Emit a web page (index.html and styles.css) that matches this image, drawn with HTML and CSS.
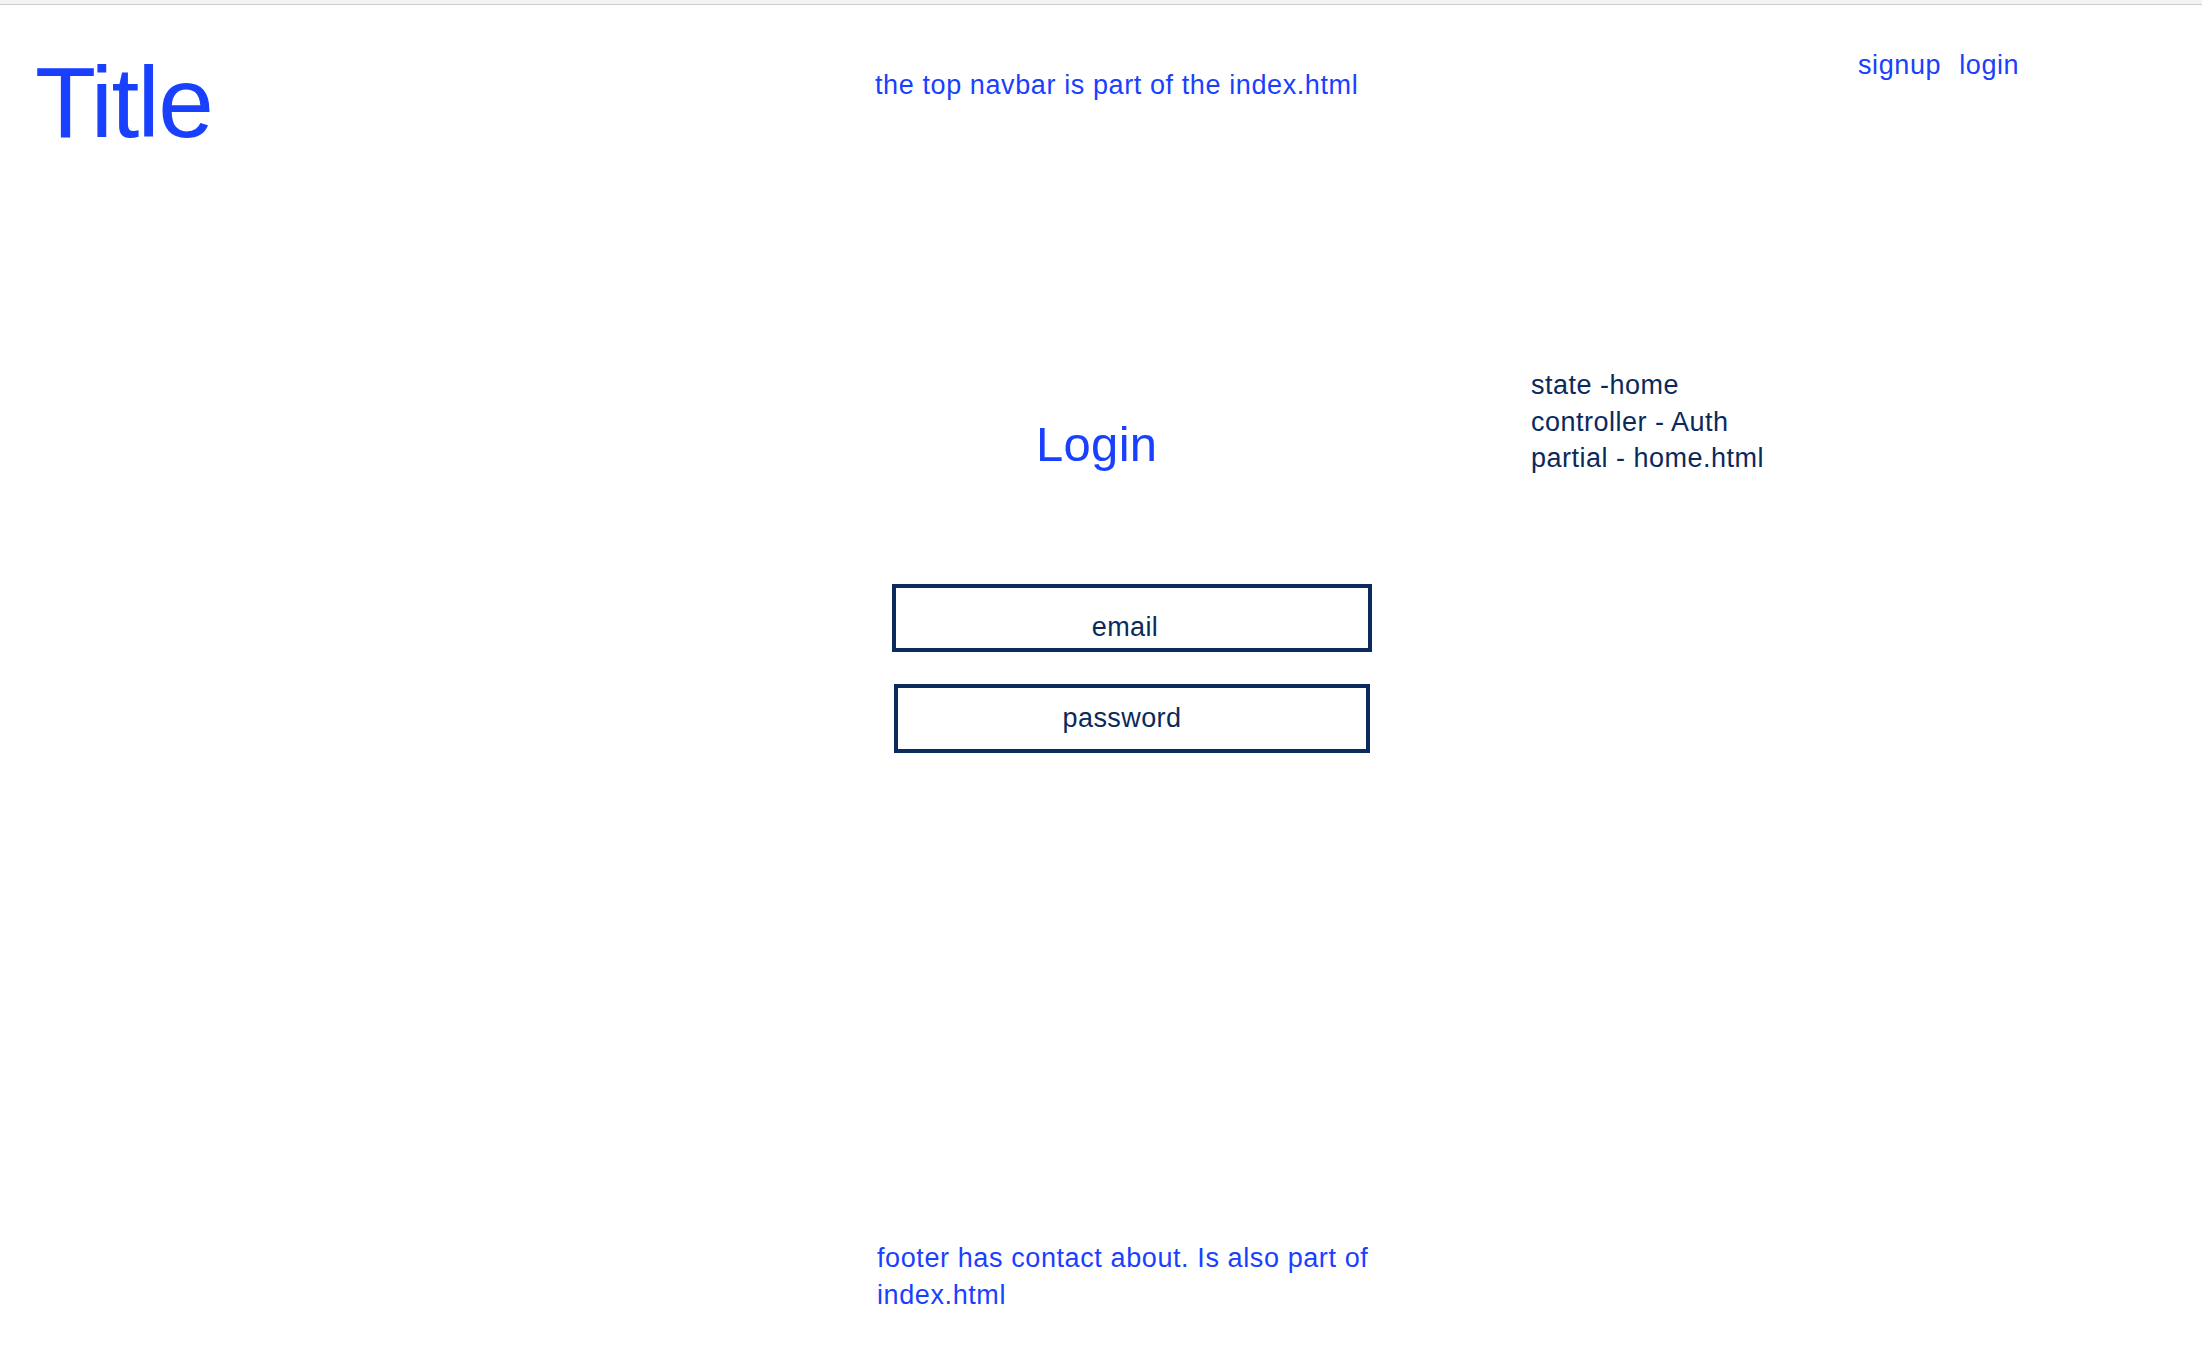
FILE: index.html
```html
<!DOCTYPE html>
<html lang="en">
<head>
<meta charset="utf-8">
<title>Title</title>
<link rel="stylesheet" href="styles.css">
</head>
<body>
<div class="topstrip"></div>
<header class="header">
  <h1 class="title">Title</h1>
  <p class="navnote">the top navbar is part of the index.html</p>
  <nav class="authlinks">
    <a class="authlink" href="#">signup</a>
    <a class="authlink" href="#">login</a>
  </nav>
</header>
<main class="main">
  <section class="form">
    <h2 class="form-title">Login</h2>
    <div class="field field-email">email</div>
    <div class="field field-password">password</div>
  </section>
  <aside class="notes">
    <div>state -home</div>
    <div>controller - Auth</div>
    <div>partial - home.html</div>
  </aside>
</main>
<footer class="footer">
  <p class="footer-text">footer has contact about. Is also part of index.html</p>
</footer>
</body>
</html>
```
FILE: styles.css
```css
html, body {
  margin: 0;
  padding: 0;
  background: #ffffff;
}
body {
  font-family: "Liberation Sans", Arial, sans-serif;
  color: #1a40ff;
}
.topstrip {
  height: 4px;
  background: #f3f3f3;
  border-bottom: 1px solid #cfcfcf;
}
.header {
  display: grid;
  grid-template-columns: 840px 983px 1fr;
  padding-left: 35px;
  height: 150px;
  align-items: start;
}
.title {
  margin: 47px 0 0 0;
  font-size: 100px;
  line-height: 100px;
  font-weight: normal;
  letter-spacing: -1.6px;
  color: #1a40ff;
}
.navnote {
  margin: 64px 0 0 0;
  font-size: 27px;
  line-height: 32px;
  letter-spacing: 0.6px;
  color: #1a40ff;
}
.authlinks {
  margin-top: 44px;
  display: flex;
  gap: 18px;
  font-size: 27px;
  line-height: 32px;
  letter-spacing: 0.6px;
}
.authlink {
  color: #1a40ff;
  text-decoration: none;
}
.main {
  display: flex;
  align-items: flex-start;
  padding-left: 892px;
}
.form {
  width: 480px;
  margin-top: 261px;
  display: flex;
  flex-direction: column;
}
.form-title {
  margin: 0 0 112px 0;
  padding-left: 144px;
  font-size: 49px;
  line-height: 56px;
  font-weight: normal;
  letter-spacing: 0.3px;
  color: #1a40ff;
}
.field {
  box-sizing: border-box;
  border: 4px solid #0c2a5e;
  color: #0b2a5c;
  font-size: 27px;
  letter-spacing: 0.4px;
  text-align: center;
}
.field-email {
  width: 480px;
  height: 68px;
  padding: 19px 14px 0 0;
  line-height: 41px;
}
.field-password {
  width: 476px;
  height: 69px;
  margin: 32px 0 0 2px;
  padding: 2px 20px 2px 0;
  line-height: 57px;
}
.notes {
  margin: 212px 0 0 159px;
  font-size: 27px;
  line-height: 36.5px;
  letter-spacing: 0.5px;
  color: #0b2a5c;
}
.footer {
  padding-left: 877px;
  margin-top: 487px;
}
.footer-text {
  margin: 0;
  width: 500px;
  font-size: 27px;
  line-height: 37px;
  letter-spacing: 0.6px;
  color: #1a40ff;
}
```
